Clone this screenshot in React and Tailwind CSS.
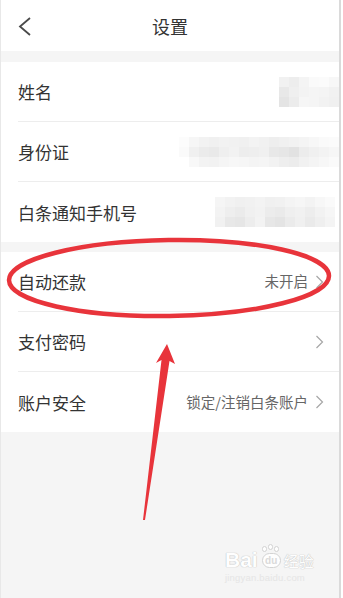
import React from 'react';

// mosaic blocks that hide the personal values (10px cells)
const MOSAIC_NAME = [
  ['bg-[#f1f1f1]', 'bg-[#ededed]', 'bg-[#f4f4f4]', 'bg-[#fafafa]', 'bg-[#fbfbfb]', 'bg-[#f7f7f7]'],
  ['bg-[#e8e8e8]', 'bg-[#efefef]', 'bg-[#f3f3f3]', 'bg-[#f5f5f5]', 'bg-[#f4f4f4]', 'bg-[#f1f1f1]'],
  ['bg-[#e4e4e4]', 'bg-[#ececec]', 'bg-[#f6f6f6]', 'bg-[#f5f5f5]', 'bg-[#f2f2f2]', 'bg-[#f0f0f0]'],
];

const MOSAIC_ID = [
  ['bg-[#fcfcfc]', 'bg-[#f6f6f6]', 'bg-[#f2f2f2]', 'bg-[#f0f0f0]', 'bg-[#f2f2f2]', 'bg-[#f1f1f1]', 'bg-[#f0f0f0]', 'bg-[#f3f3f3]', 'bg-[#f1f1f1]', 'bg-[#eeeeee]', 'bg-[#f0f0f0]', 'bg-[#f2f2f2]', 'bg-[#f4f4f4]', 'bg-[#f7f7f7]', 'bg-[#fafafa]', 'bg-[#fbfbfb]'],
  ['bg-[#fafafa]', 'bg-[#f0f0f0]', 'bg-[#ebebeb]', 'bg-[#e9e9e9]', 'bg-[#efefef]', 'bg-[#f2f2f2]', 'bg-[#ededed]', 'bg-[#eeeeee]', 'bg-[#f0f0f0]', 'bg-[#e8e8e8]', 'bg-[#e6e6e6]', 'bg-[#e2e2e2]', 'bg-[#ececec]', 'bg-[#f0f0f0]', 'bg-[#f3f3f3]', 'bg-[#f6f6f6]'],
  ['bg-[#ffffff]', 'bg-[#f8f8f8]', 'bg-[#f3f3f3]', 'bg-[#f2f2f2]', 'bg-[#f5f5f5]', 'bg-[#f7f7f7]', 'bg-[#f6f6f6]', 'bg-[#f4f4f4]', 'bg-[#f5f5f5]', 'bg-[#f2f2f2]', 'bg-[#eeeeee]', 'bg-[#ececec]', 'bg-[#f1f1f1]', 'bg-[#f4f4f4]', 'bg-[#f7f7f7]', 'bg-[#fafafa]'],
];

const MOSAIC_PHONE = [
  ['bg-[#f5f5f5]', 'bg-[#f2f2f2]', 'bg-[#f0f0f0]', 'bg-[#f1f1f1]', 'bg-[#f3f3f3]', 'bg-[#f0f0f0]', 'bg-[#f1f1f1]', 'bg-[#f4f4f4]', 'bg-[#f6f6f6]', 'bg-[#f3f3f3]', 'bg-[#f7f7f7]', 'bg-[#fafafa]'],
  ['bg-[#f3f3f3]', 'bg-[#eeeeee]', 'bg-[#ebebeb]', 'bg-[#f0f0f0]', 'bg-[#f2f2f2]', 'bg-[#ececec]', 'bg-[#eaeaea]', 'bg-[#efefef]', 'bg-[#f1f1f1]', 'bg-[#ededed]', 'bg-[#f2f2f2]', 'bg-[#f6f6f6]'],
  ['bg-[#f1f1f1]', 'bg-[#e8e8e8]', 'bg-[#e6e6e6]', 'bg-[#ededed]', 'bg-[#f3f3f3]', 'bg-[#e7e7e7]', 'bg-[#e4e4e4]', 'bg-[#ebebeb]', 'bg-[#f0f0f0]', 'bg-[#eaeaea]', 'bg-[#efefef]', 'bg-[#f4f4f4]'],
];

function Mosaic({ cells }) {
  return (
    <div className="flex flex-col">
      {cells.map((row, i) => (
        <div key={i} className="flex">
          {row.map((c, j) => (
            <div key={j} className={'w-[10px] h-[10px] ' + c} />
          ))}
        </div>
      ))}
    </div>
  );
}

function Chevron() {
  return (
    <svg width="9" height="14" viewBox="0 0 9 14" className="shrink-0">
      <polyline points="1.5,1 7.5,7 1.5,13" fill="none" stroke="#a6a6a6" strokeWidth="1.2" />
    </svg>
  );
}

function Row({ label, last, children }) {
  return (
    <div className="pl-[17px] bg-white">
      <div
        className={
          'h-[60px] flex items-center justify-between ' + (last ? '' : 'border-b border-[#ededed]')
        }
      >
        <span className="text-[17px] text-[#333] leading-none">{label}</span>
        {children}
      </div>
    </div>
  );
}

function Value({ text }) {
  return (
    <div className="flex items-center gap-[7px] pr-[15px]">
      {text && <span className="text-[14.5px] text-[#666] leading-none">{text}</span>}
      <Chevron />
    </div>
  );
}

export default function App() {
  return (
    <div className="relative w-[343px] h-[598px] bg-white overflow-hidden font-['Noto_Sans_CJK_SC','Noto_Sans',sans-serif]">
      <div className="w-[341px] h-full bg-[#f5f5f5] border-l border-l-[#e8e8e8] border-r-2 border-r-[#dadada]">
        {/* barre de titre */}
        <div className="h-[51px] bg-white flex items-center">
          <div className="w-[60px] pl-[17px] flex items-center">
            <svg width="14" height="20" viewBox="0 0 14 20">
              <polyline points="12,2 2,10.5 12,19" fill="none" stroke="#4a4a4a" strokeWidth="1.8" />
            </svg>
          </div>
          <div className="flex-1 text-center text-[18px] text-[#333] leading-none">设置</div>
          <div className="w-[60px]" />
        </div>

        <div className="mt-[11px]">
          <Row label="姓名">
            <Mosaic cells={MOSAIC_NAME} />
          </Row>
          <Row label="身份证">
            <Mosaic cells={MOSAIC_ID} />
          </Row>
          <Row label="白条通知手机号" last>
            <div className="pr-[4px]">
              <Mosaic cells={MOSAIC_PHONE} />
            </div>
          </Row>
        </div>

        <div className="mt-[10px]">
          <Row label="自动还款">
            <Value text="未开启" />
          </Row>
          <Row label="支付密码">
            <Value />
          </Row>
          <Row label="账户安全" last>
            <Value text="锁定/注销白条账户" />
          </Row>
        </div>
      </div>

      {/* annotation rouge : ellipse + flèche */}
      <svg className="absolute inset-0 pointer-events-none" width="343" height="598" viewBox="0 0 343 598">
        <ellipse
          cx="169"
          cy="278"
          rx="160"
          ry="38"
          fill="none"
          stroke="#e8343b"
          strokeWidth="4.5"
          transform="rotate(-0.8 169 278)"
        />
        <polygon
          points="167,344 175,364 169.5,361 145,520 143,520 161.5,360 156,363"
          fill="#e8343b"
        />
      </svg>

      {/* filigrane Baidu */}
      <div className="absolute left-[225px] top-[544px] flex flex-col items-start opacity-90">
        <div className="flex items-end gap-[1px]">
          <span className="text-[21px] font-bold leading-none text-white [text-shadow:0_0_1px_#bdbdbd,0_0_1px_#bdbdbd] font-['Liberation_Sans',sans-serif]">
            Bai
          </span>
          <div className="relative w-[24px] h-[26px]">
            <span className="absolute left-[3px] top-[2px] w-[5px] h-[6px] rounded-full bg-white border border-[#d0d0d0]" />
            <span className="absolute left-[9px] top-0 w-[5px] h-[6px] rounded-full bg-white border border-[#d0d0d0]" />
            <span className="absolute left-[15px] top-[2px] w-[5px] h-[6px] rounded-full bg-white border border-[#d0d0d0]" />
            <span className="absolute left-[3px] top-[9px] w-[19px] h-[15px] rounded-full bg-white border border-[#d0d0d0] flex items-center justify-center text-[10px] font-bold text-[#d8d8d8] leading-none font-['Liberation_Sans',sans-serif]">
              du
            </span>
          </div>
          <span className="text-[15px] leading-none text-white [text-shadow:0_0_1px_#bdbdbd,0_0_1px_#bdbdbd] pb-[2px]">
            经验
          </span>
        </div>
        <span className="mt-[3px] text-[9.5px] leading-none text-[#e4e4e4] font-['Liberation_Sans',sans-serif] tracking-[0.2px]">
          jingyan.baidu.com
        </span>
      </div>
    </div>
  );
}
